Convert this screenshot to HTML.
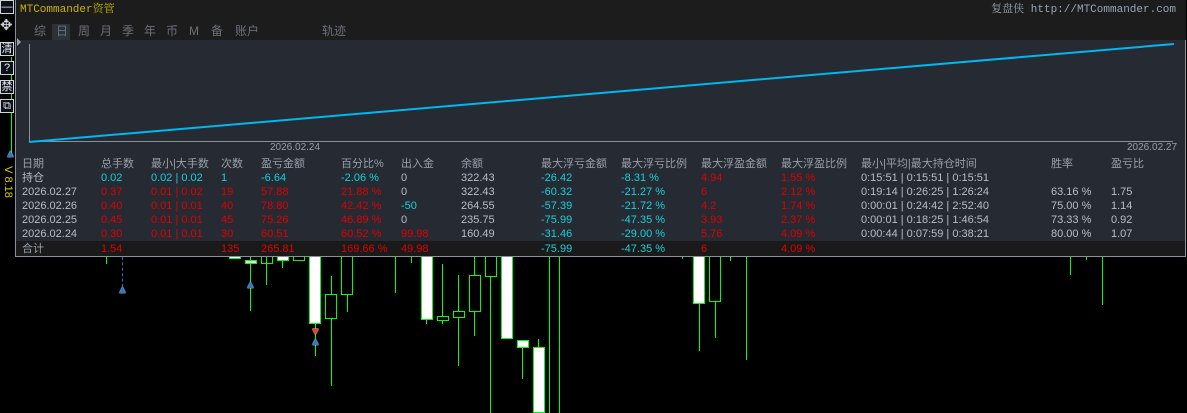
<!DOCTYPE html>
<html><head><meta charset="utf-8"><style>
body{margin:0;width:1187px;height:413px;background:#000;position:relative;overflow:hidden;font-family:"Liberation Sans","Noto Sans CJK SC",sans-serif;}
.a{position:absolute;}
.t{position:absolute;font-size:11px;line-height:14px;white-space:nowrap;}
.g{color:#b8bec8}.c{color:#18d0d8}.r{color:#e00000}.h{color:#9aa0aa}
.btn{position:absolute;left:0;width:12px;height:12px;border:1px solid #cfd4dc;background:#0c1018;color:#e8ecf0;font-size:11px;line-height:12px;text-align:center;}
.cw{position:absolute;background:#00ff00;width:1px;}
.cb{position:absolute;border:1px solid #00ff00;box-sizing:border-box;}
.wb{background:#fff;}
.ar{position:absolute;font-size:11px;color:#2a78d0;text-shadow:0 0 1px #fff,0 0 1px #fff;}
</style></head><body>
<!-- candles -->
<div class="cw" style="left:106px;top:256px;height:8px"></div>
<div class="a" style="left:122px;top:257px;height:30px;border-left:1px dashed #3a70c0"></div>
<div class="ar" style="left:117px;top:284px">&#9650;</div>
<div class="cb wb" style="left:229px;top:255px;width:12px;height:4px"></div>
<div class="cw" style="left:250px;top:256px;height:55px"></div>
<div class="cb wb" style="left:245px;top:260px;width:12px;height:4px"></div>
<div class="ar" style="left:245px;top:279px">&#9650;</div>
<div class="cw" style="left:266px;top:256px;height:29px"></div>
<div class="cb" style="left:261px;top:255px;width:12px;height:9px"></div>
<div class="cw" style="left:282px;top:256px;height:12px"></div>
<div class="cb wb" style="left:277px;top:255px;width:12px;height:6px"></div>
<div class="cb" style="left:293px;top:255px;width:12px;height:6px"></div>
<div class="cw" style="left:315px;top:256px;height:100px"></div>
<div class="cb wb" style="left:309px;top:255px;width:12px;height:69px"></div>
<div class="ar" style="left:310px;top:326px;color:#e04020">&#9660;</div>
<div class="ar" style="left:310px;top:336px">&#9650;</div>
<div class="cw" style="left:331px;top:276px;height:110px"></div>
<div class="cb" style="left:325px;top:294px;width:12px;height:25px;background:#000"></div>
<div class="cw" style="left:347px;top:256px;height:56px"></div>
<div class="cb" style="left:341px;top:255px;width:12px;height:40px;background:#000"></div>
<div class="cw" style="left:395px;top:256px;height:37px"></div>
<div class="cw" style="left:411px;top:256px;height:7px"></div>
<div class="cw" style="left:426px;top:256px;height:68px"></div>
<div class="cb wb" style="left:421px;top:255px;width:12px;height:65px"></div>
<div class="cw" style="left:442px;top:264px;height:60px"></div>
<div class="cb" style="left:437px;top:316px;width:12px;height:5px;background:#000"></div>
<div class="cw" style="left:458px;top:275px;height:91px"></div>
<div class="cb" style="left:453px;top:311px;width:12px;height:7px;background:#000"></div>
<div class="cw" style="left:474px;top:256px;height:80px"></div>
<div class="cb" style="left:469px;top:275px;width:12px;height:37px;background:#000"></div>
<div class="cw" style="left:490px;top:256px;height:157px"></div>
<div class="cb" style="left:485px;top:255px;width:12px;height:22px;background:#000"></div>
<div class="cb wb" style="left:501px;top:255px;width:12px;height:84px"></div>
<div class="cw" style="left:522px;top:340px;height:39px"></div>
<div class="cb wb" style="left:517px;top:340px;width:12px;height:8px"></div>
<div class="cw" style="left:538px;top:339px;height:10px"></div>
<div class="cb wb" style="left:533px;top:347px;width:12px;height:66px"></div>
<div class="cw" style="left:549px;top:256px;height:157px"></div>
<div class="cw" style="left:559px;top:256px;height:157px"></div>
<div class="cw" style="left:682px;top:256px;height:3px"></div>
<div class="cw" style="left:699px;top:256px;height:95px"></div>
<div class="cb wb" style="left:693px;top:255px;width:12px;height:49px"></div>
<div class="cw" style="left:715px;top:256px;height:82px"></div>
<div class="cb" style="left:709px;top:255px;width:12px;height:47px;background:#000"></div>
<div class="cw" style="left:730px;top:256px;height:5px"></div>
<div class="cw" style="left:746px;top:256px;height:104px"></div>
<div class="cw" style="left:1070px;top:256px;height:19px"></div>
<div class="cw" style="left:1086px;top:256px;height:4px"></div>
<div class="cw" style="left:1102px;top:256px;height:49px"></div>
<!-- left toolbar -->
<div class="cw" style="left:11px;top:57px;height:100px"></div>
<div class="btn" style="top:0">—</div>
<div class="a" style="left:0;top:16px;color:#d0d4da;font-size:15px">✥</div>
<div class="btn" style="top:42px">清</div>
<div class="btn" style="top:61px">?</div>
<div class="btn" style="top:80px">禁</div>
<div class="btn" style="top:99px">⧉</div>
<div class="ar" style="left:5px;top:148px">&#9650;</div>
<div class="a" style="left:-8px;top:176px;color:#d8d000;font-size:11px;transform:rotate(90deg);white-space:nowrap">V 8.18</div>
<!-- panel -->
<div class="a" style="left:15px;top:0;width:1171px;height:257px;background:#252a33;border:1px solid #8890a0;border-top:none;box-sizing:border-box"></div>
<div class="a" style="left:16px;top:0;width:1170px;height:40px;background:#1c1c1c"></div>
<div class="t" style="left:20px;top:3px;color:#c8b400;font-family:'Liberation Mono','Noto Serif CJK SC',serif">MTCommander资管</div>
<div class="t" style="right:11px;top:3px;color:#9aa4b4;font-family:'Liberation Mono','Noto Serif CJK SC',serif">复盘侠 http://MTCommander.com</div>
<div class="a" style="left:52px;top:24px;width:18px;height:16px;background:#2c313a"></div>
<div class="t" style="left:34px;top:24px;color:#6c7078;font-size:12px;word-spacing:0">
<span style="position:absolute;left:0">综</span><span style="position:absolute;left:22px">日</span><span style="position:absolute;left:44px">周</span><span style="position:absolute;left:66px">月</span><span style="position:absolute;left:88px">季</span><span style="position:absolute;left:110px">年</span><span style="position:absolute;left:132px">币</span><span style="position:absolute;left:155px">M</span><span style="position:absolute;left:177px">备</span><span style="position:absolute;left:201px">账户</span><span style="position:absolute;left:288px">轨迹</span></div>
<div class="a" style="left:17px;top:38px;width:0;height:0;border:4px solid transparent;border-left-color:#9aa0aa"></div>
<svg class="a" style="left:0;top:0" width="1187" height="160">
<line x1="29.5" y1="44" x2="29.5" y2="142" stroke="#8a8f98"/>
<line x1="29" y1="141.5" x2="1173" y2="141.5" stroke="#8a8f98"/>
<line x1="29" y1="142" x2="1174" y2="44" stroke="#00b8f0" stroke-width="2"/>
</svg>
<div class="t h" style="left:270px;top:141px;font-size:10px">2026.02.24</div>
<div class="t h" style="left:1127px;top:141px;font-size:10px">2026.02.27</div>
<div class="a" style="left:16px;top:241px;width:1169px;height:15px;background:#1a1a1a"></div>
<!-- table -->
<div class="t h" style="left:22px;top:157px">日期</div><div class="t h" style="left:101px;top:157px">总手数</div><div class="t h" style="left:151px;top:157px">最小|大手数</div><div class="t h" style="left:221px;top:157px">次数</div><div class="t h" style="left:261px;top:157px">盈亏金额</div><div class="t h" style="left:341px;top:157px">百分比%</div><div class="t h" style="left:401px;top:157px">出入金</div><div class="t h" style="left:461px;top:157px">余额</div><div class="t h" style="left:541px;top:157px">最大浮亏金额</div><div class="t h" style="left:621px;top:157px">最大浮亏比例</div><div class="t h" style="left:701px;top:157px">最大浮盈金额</div><div class="t h" style="left:781px;top:157px">最大浮盈比例</div><div class="t h" style="left:861px;top:157px">最小|平均|最大持仓时间</div><div class="t h" style="left:1051px;top:157px">胜率</div><div class="t h" style="left:1111px;top:157px">盈亏比</div>

<div class="t g" style="left:22px;top:171px">持仓</div><div class="t c" style="left:101px;top:171px">0.02</div><div class="t c" style="left:151px;top:171px">0.02 | 0.02</div><div class="t c" style="left:221px;top:171px">1</div><div class="t c" style="left:261px;top:171px">-6.64</div><div class="t c" style="left:341px;top:171px">-2.06 %</div><div class="t g" style="left:401px;top:171px">0</div><div class="t g" style="left:461px;top:171px">322.43</div><div class="t c" style="left:541px;top:171px">-26.42</div><div class="t c" style="left:621px;top:171px">-8.31 %</div><div class="t r" style="left:701px;top:171px">4.94</div><div class="t r" style="left:781px;top:171px">1.55 %</div><div class="t g" style="left:861px;top:171px">0:15:51 | 0:15:51 | 0:15:51</div>

<div class="t g" style="left:22px;top:185px">2026.02.27</div><div class="t r" style="left:101px;top:185px">0.37</div><div class="t r" style="left:151px;top:185px">0.01 | 0.02</div><div class="t r" style="left:221px;top:185px">19</div><div class="t r" style="left:261px;top:185px">57.88</div><div class="t r" style="left:341px;top:185px">21.88 %</div><div class="t g" style="left:401px;top:185px">0</div><div class="t g" style="left:461px;top:185px">322.43</div><div class="t c" style="left:541px;top:185px">-60.32</div><div class="t c" style="left:621px;top:185px">-21.27 %</div><div class="t r" style="left:701px;top:185px">6</div><div class="t r" style="left:781px;top:185px">2.12 %</div><div class="t g" style="left:861px;top:185px">0:19:14 | 0:26:25 | 1:26:24</div><div class="t g" style="left:1051px;top:185px">63.16 %</div><div class="t g" style="left:1111px;top:185px">1.75</div>

<div class="t g" style="left:22px;top:199px">2026.02.26</div><div class="t r" style="left:101px;top:199px">0.40</div><div class="t r" style="left:151px;top:199px">0.01 | 0.01</div><div class="t r" style="left:221px;top:199px">40</div><div class="t r" style="left:261px;top:199px">78.80</div><div class="t r" style="left:341px;top:199px">42.42 %</div><div class="t c" style="left:401px;top:199px">-50</div><div class="t g" style="left:461px;top:199px">264.55</div><div class="t c" style="left:541px;top:199px">-57.39</div><div class="t c" style="left:621px;top:199px">-21.72 %</div><div class="t r" style="left:701px;top:199px">4.2</div><div class="t r" style="left:781px;top:199px">1.74 %</div><div class="t g" style="left:861px;top:199px">0:00:01 | 0:24:42 | 2:52:40</div><div class="t g" style="left:1051px;top:199px">75.00 %</div><div class="t g" style="left:1111px;top:199px">1.14</div>

<div class="t g" style="left:22px;top:213px">2026.02.25</div><div class="t r" style="left:101px;top:213px">0.45</div><div class="t r" style="left:151px;top:213px">0.01 | 0.01</div><div class="t r" style="left:221px;top:213px">45</div><div class="t r" style="left:261px;top:213px">75.26</div><div class="t r" style="left:341px;top:213px">46.89 %</div><div class="t g" style="left:401px;top:213px">0</div><div class="t g" style="left:461px;top:213px">235.75</div><div class="t c" style="left:541px;top:213px">-75.99</div><div class="t c" style="left:621px;top:213px">-47.35 %</div><div class="t r" style="left:701px;top:213px">3.93</div><div class="t r" style="left:781px;top:213px">2.37 %</div><div class="t g" style="left:861px;top:213px">0:00:01 | 0:18:25 | 1:46:54</div><div class="t g" style="left:1051px;top:213px">73.33 %</div><div class="t g" style="left:1111px;top:213px">0.92</div>

<div class="t g" style="left:22px;top:227px">2026.02.24</div><div class="t r" style="left:101px;top:227px">0.30</div><div class="t r" style="left:151px;top:227px">0.01 | 0.01</div><div class="t r" style="left:221px;top:227px">30</div><div class="t r" style="left:261px;top:227px">60.51</div><div class="t r" style="left:341px;top:227px">60.52 %</div><div class="t r" style="left:401px;top:227px">99.98</div><div class="t g" style="left:461px;top:227px">160.49</div><div class="t c" style="left:541px;top:227px">-31.46</div><div class="t c" style="left:621px;top:227px">-29.00 %</div><div class="t r" style="left:701px;top:227px">5.76</div><div class="t r" style="left:781px;top:227px">4.09 %</div><div class="t g" style="left:861px;top:227px">0:00:44 | 0:07:59 | 0:38:21</div><div class="t g" style="left:1051px;top:227px">80.00 %</div><div class="t g" style="left:1111px;top:227px">1.07</div>

<div class="t h" style="left:22px;top:242px">合计</div><div class="t r" style="left:101px;top:242px">1.54</div><div class="t r" style="left:221px;top:242px">135</div><div class="t r" style="left:261px;top:242px">265.81</div><div class="t r" style="left:341px;top:242px">169.66 %</div><div class="t r" style="left:401px;top:242px">49.98</div><div class="t c" style="left:541px;top:242px">-75.99</div><div class="t c" style="left:621px;top:242px">-47.35 %</div><div class="t r" style="left:701px;top:242px">6</div><div class="t r" style="left:781px;top:242px">4.09 %</div>
</body></html>
